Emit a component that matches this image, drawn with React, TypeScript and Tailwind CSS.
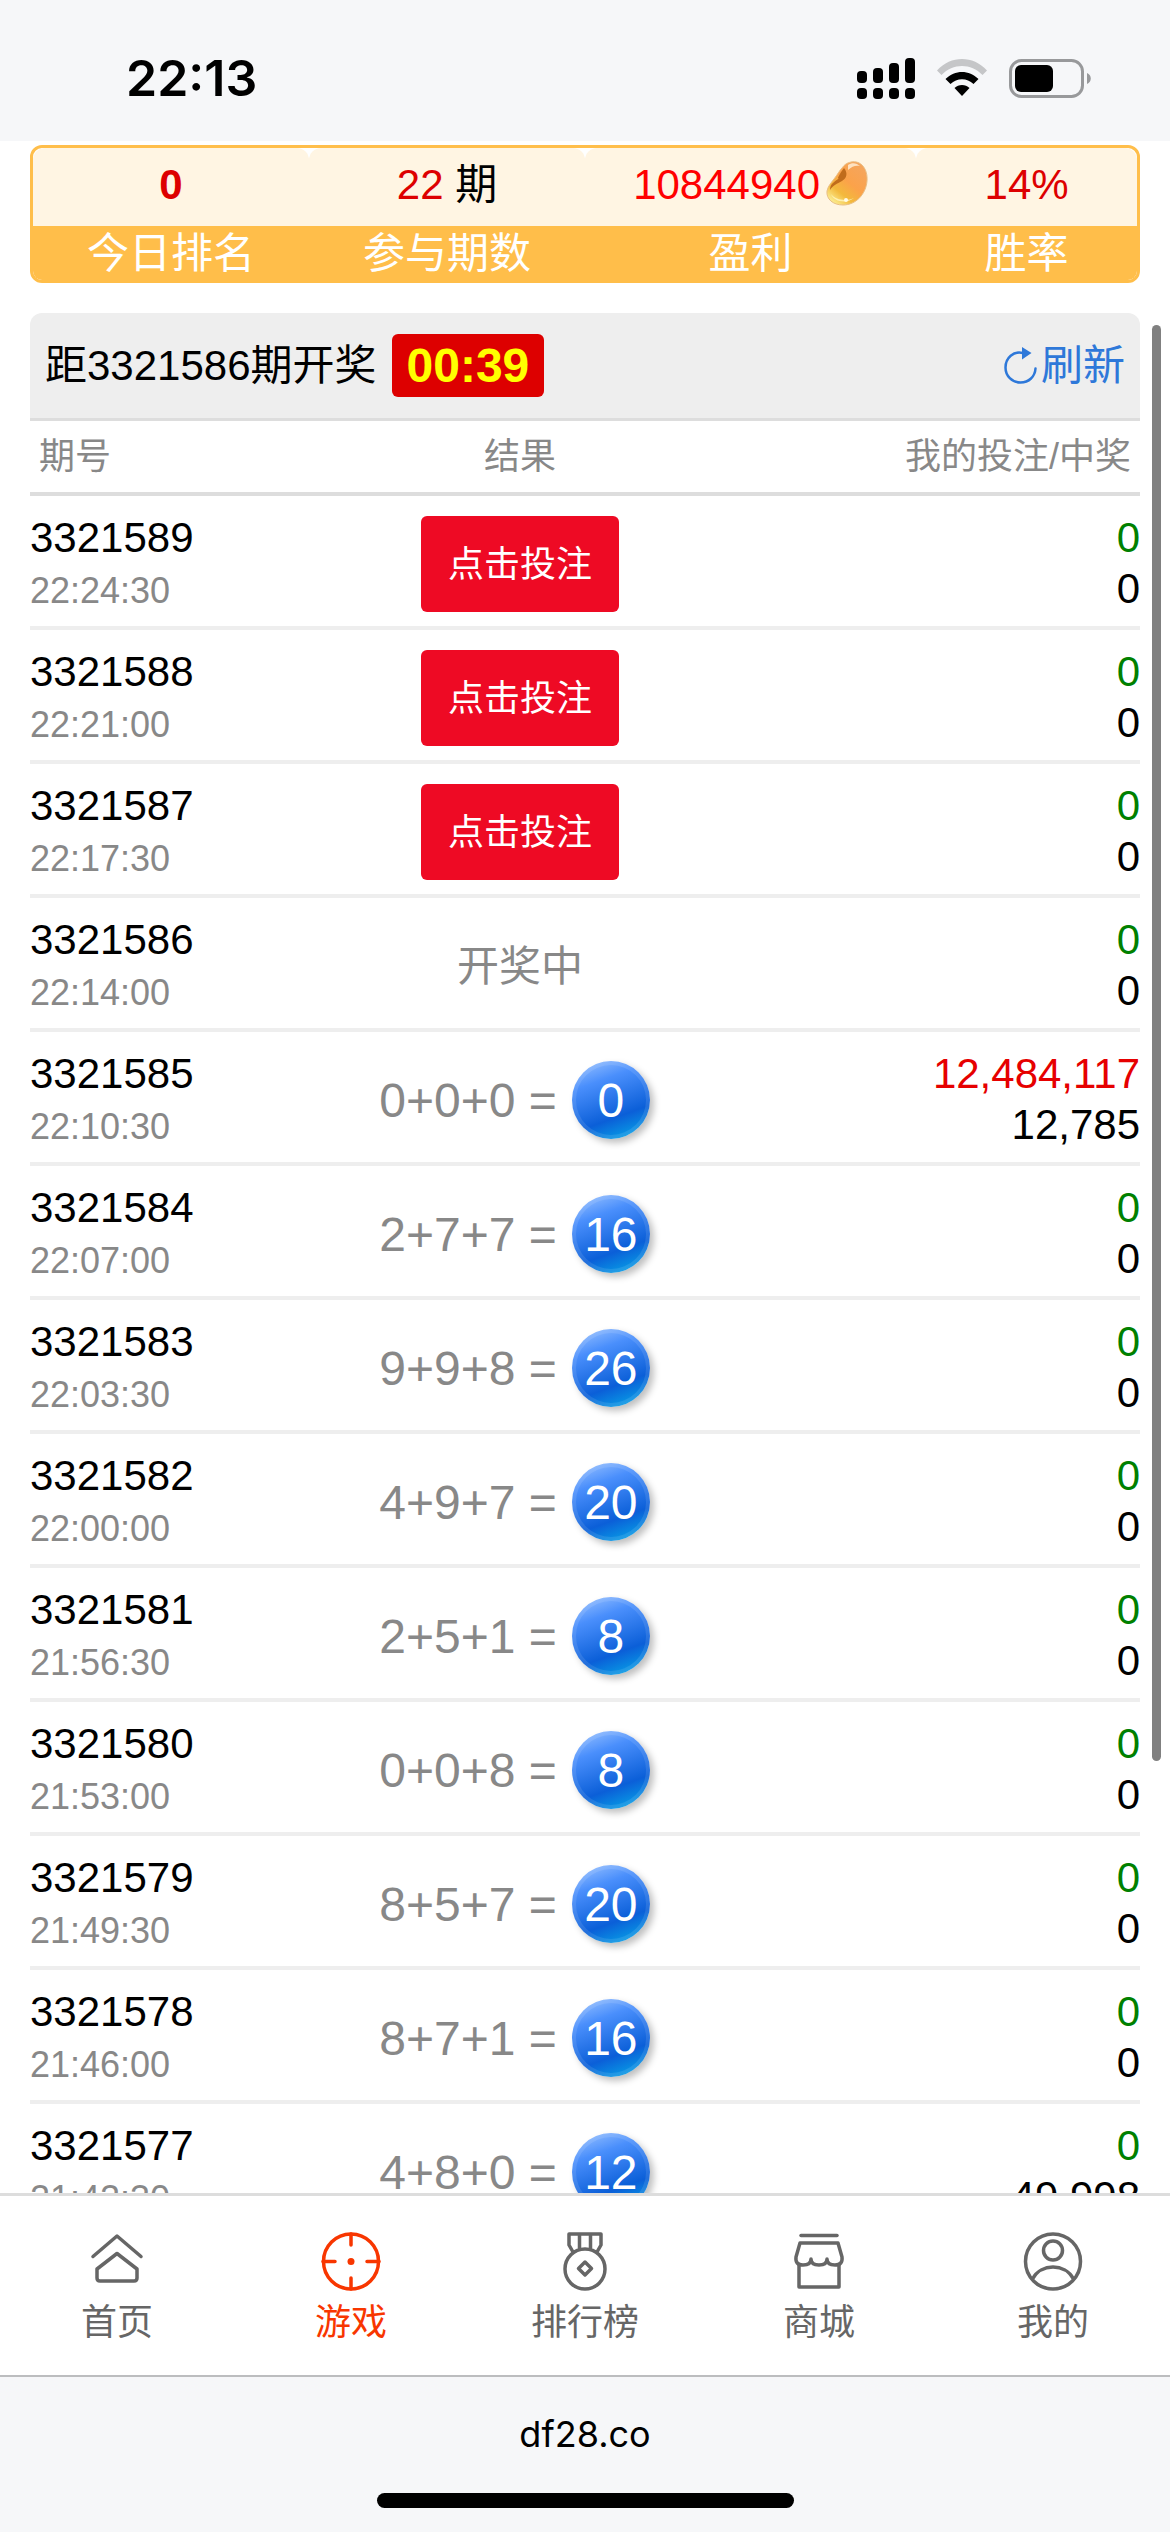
type Draw = {
  id: string;
  time: string;
  status: 'open' | 'pending' | 'done';
  sum?: string;
  total?: number;
  bet: string;
  win: string;
  hit?: boolean;
};

const draws: Draw[] = [
  { id: '3321589', time: '22:24:30', status: 'open', bet: '0', win: '0' },
  { id: '3321588', time: '22:21:00', status: 'open', bet: '0', win: '0' },
  { id: '3321587', time: '22:17:30', status: 'open', bet: '0', win: '0' },
  { id: '3321586', time: '22:14:00', status: 'pending', bet: '0', win: '0' },
  { id: '3321585', time: '22:10:30', status: 'done', sum: '0+0+0', total: 0, bet: '12,484,117', win: '12,785', hit: true },
  { id: '3321584', time: '22:07:00', status: 'done', sum: '2+7+7', total: 16, bet: '0', win: '0' },
  { id: '3321583', time: '22:03:30', status: 'done', sum: '9+9+8', total: 26, bet: '0', win: '0' },
  { id: '3321582', time: '22:00:00', status: 'done', sum: '4+9+7', total: 20, bet: '0', win: '0' },
  { id: '3321581', time: '21:56:30', status: 'done', sum: '2+5+1', total: 8, bet: '0', win: '0' },
  { id: '3321580', time: '21:53:00', status: 'done', sum: '0+0+8', total: 8, bet: '0', win: '0' },
  { id: '3321579', time: '21:49:30', status: 'done', sum: '8+5+7', total: 20, bet: '0', win: '0' },
  { id: '3321578', time: '21:46:00', status: 'done', sum: '8+7+1', total: 16, bet: '0', win: '0' },
  { id: '3321577', time: '21:42:30', status: 'done', sum: '4+8+0', total: 12, bet: '0', win: '49,998' },
];

function SignalIcon() {
  const tops = [13, 10, 5, 0];
  return (
    <svg width="58" height="41" viewBox="0 0 58 41" aria-hidden="true">
      {tops.map((top, i) => (
        <g key={i}>
          <rect x={i * 16} y={top} width="10" height={25 - top} rx="4" />
          <rect x={i * 16} y="30" width="10" height="11" rx="4" />
        </g>
      ))}
    </svg>
  );
}

function WifiIcon() {
  return (
    <svg width="50" height="38" viewBox="0 0 50 38" aria-hidden="true">
      <path d="M0 11.5C14-3.8 36-3.8 50 11.5L45.5 16C34 4 16 4 4.500 16Z" fill="#c5c6c8" />
      <path d="M8.500 20C18 10.500 32 10.500 41.500 20L36.500 25C30 18.500 20 18.500 13.500 25Z" />
      <path d="M17.500 29C21.500 25 28.500 25 32.500 29L25 37Z" />
    </svg>
  );
}

function BatteryIcon() {
  return (
    <svg width="82" height="39" viewBox="0 0 82 39" aria-hidden="true">
      <rect x="1.5" y="1.5" width="72" height="36" rx="11" fill="none" stroke="#98999b" strokeWidth="3" />
      <rect x="6" y="6" width="38" height="27" rx="6" />
      <path d="M78 14c5 2 5 9 0 11Z" fill="#98999b" />
    </svg>
  );
}

function BeanIcon() {
  return (
    <svg width="42" height="45" viewBox="0 0 42 45" aria-hidden="true">
      <defs>
        <linearGradient id="bean" x1="0.85" y1="0.1" x2="0.2" y2="0.95">
          <stop offset="0" stopColor="#f5a55c" />
          <stop offset="0.45" stopColor="#fba24a" />
          <stop offset="0.75" stopColor="#f3b93c" />
          <stop offset="1" stopColor="#fbe98a" />
        </linearGradient>
      </defs>
      <path
        d="M25 1C35-1 42 8 41 20C40 33 30 44 17 44C7 44 0 38 1 30C2 25 5 22 8 18C12 13 13 10 16 7C19 3 21 2 25 1Z"
        fill="url(#bean)"
        stroke="#e8bd84"
        strokeWidth="1"
      />
      <path d="M18 7C22 12 21 17 16 20C11 23 7 24 4 29C4 22 9 21 13 17C10 19 15 11 18 7Z" fill="#c06c1c" />
      <path d="M22 4C26 1 31 2 34 5C30 4 26 5 22 9Z" fill="#fff1dc" opacity="0.8" />
      <path d="M5 33C8 41 20 43 28 37C22 40 10 40 5 33Z" fill="#fff7c4" opacity="0.8" />
      <circle cx="20" cy="39" r="2" fill="#fffbe8" />
    </svg>
  );
}

function RefreshIcon() {
  return (
    <svg width="33" height="38" viewBox="0 0 33 38" fill="none" aria-hidden="true">
      <path d="M19 6C9.500 3.500 1.500 11 1.500 20.500C1.500 29 8 35.500 16.500 35.500C25 35.500 31 29.500 31.500 21.500" stroke="currentColor" strokeWidth="2.500" strokeLinecap="round" />
      <path d="M18 0L27.500 6L18 12.500Z" fill="currentColor" />
    </svg>
  );
}

const tabs = [
  {
    label: '首页',
    icon: (
      <>
        <path d="M6 24.500L30 4L54 24.500" />
        <path d="M10 37L30 21.500L50 37V46Q50 49 47 49H13Q10 49 10 46Z" />
      </>
    ),
  },
  {
    label: '游戏',
    active: true,
    icon: (
      <>
        <circle cx="30" cy="29.5" r="27.5" />
        <path d="M30 2V13M30 46V57M2 29.500H14M46 29.500H58" />
        <circle cx="30" cy="29.5" r="3.5" fill="currentColor" stroke="none" />
      </>
    ),
  },
  {
    label: '排行榜',
    icon: (
      <>
        <circle cx="30" cy="37" r="20" />
        <path d="M18 20L14 13V2H46V13L42 20M24.500 2V16M35.500 2V16" />
        <path d="M30 30L36.500 36.500L30 43L23.500 36.500Z" />
      </>
    ),
  },
  {
    label: '商城',
    icon: (
      <>
        <path d="M12 3.500H48" />
        <path d="M11 11H49L53 25Q54 33 46 33Q38 33 38 27Q38 33 30 33Q22 33 22 27Q22 33 14 33Q6 33 7 25Z" />
        <path d="M10 33V55H50V33" />
      </>
    ),
  },
  {
    label: '我的',
    icon: (
      <>
        <circle cx="30" cy="29.5" r="27.5" />
        <circle cx="30" cy="18.5" r="9.5" />
        <path d="M9.500 47C18 31 42 31 50.500 47" />
      </>
    ),
  },
];

function Result({ draw }: { draw: Draw }) {
  if (draw.status === 'open') {
    return (
      <button type="button" className="h-24 rounded-md bg-[#ee0a24] px-[27px] text-[36px] text-white">
        点击投注
      </button>
    );
  }
  if (draw.status === 'pending') {
    return <span className="text-[42px] text-[#888]">开奖中</span>;
  }
  return (
    <div className="flex items-center justify-center gap-[15px] pr-[11px] text-[48px] text-[#888]">
      <span>{draw.sum} =</span>
      <span className="flex size-[78px] items-center justify-center rounded-full bg-[linear-gradient(160deg,#a3c8ff_0%,#4a8ffc_28%,#0b5fd8_68%,#05b4ea_100%)] text-white shadow-[4px_4px_7px_rgba(0,0,0,0.25),inset_0_0_0_4px_rgba(255,255,255,0.1)]">
        {draw.total}
      </span>
    </div>
  );
}

export default function App() {
  return (
    <div className="flex h-screen flex-col bg-white font-['Liberation_Sans','Noto_Sans_CJK_SC',sans-serif] text-black">
      {/* Status bar */}
      <header className="flex h-[141px] shrink-0 items-center justify-between bg-[#f6f7f9] pr-[79px] pb-[13px] pl-[126px] pt-7">
        <time className="font-['Inter',sans-serif] text-[50px] leading-[60px] font-semibold">22:13</time>
        <div className="flex items-center gap-[22px]">
          <SignalIcon />
          <WifiIcon />
          <BatteryIcon />
        </div>
      </header>

      <main className="relative min-h-0 flex-1 overflow-hidden px-[30px] pt-1">
        {/* Today's stats */}
        <dl className="grid grid-cols-[25fr_25fr_30fr_20fr] overflow-hidden rounded-xl border-3 border-[#ffbe4a] bg-white text-center text-[42px]">
          <div className="flex flex-col-reverse">
            <dt className="h-[54px] bg-[#ffbe4a] leading-[56px] text-white">今日排名</dt>
            <dd className="h-[78px] rounded-t-xl bg-[#fff5e3] leading-[74px] font-bold text-[#d00]">0</dd>
          </div>
          <div className="flex flex-col-reverse">
            <dt className="h-[54px] bg-[#ffbe4a] leading-[56px] text-white">参与期数</dt>
            <dd className="h-[78px] rounded-t-xl bg-[#fff5e3] leading-[74px]">
              <span className="text-[#d00]">22</span> 期
            </dd>
          </div>
          <div className="flex flex-col-reverse">
            <dt className="h-[54px] bg-[#ffbe4a] leading-[56px] text-white">盈利</dt>
            <dd className="flex h-[78px] justify-center gap-1.5 rounded-t-xl bg-[#fff5e3] pt-[13px] leading-[48px] text-[#f00]">
              10844940
              <BeanIcon />
            </dd>
          </div>
          <div className="flex flex-col-reverse">
            <dt className="h-[54px] bg-[#ffbe4a] leading-[56px] text-white">胜率</dt>
            <dd className="h-[78px] rounded-t-xl bg-[#fff5e3] leading-[74px] text-[#d00]">14%</dd>
          </div>
        </dl>

        {/* Countdown */}
        <div className="mt-[30px] flex h-[108px] items-center justify-between rounded-t-xl border-b-3 border-[#ddd] bg-[#eee] px-[15px] text-[42px]">
          <div className="flex items-center gap-[15px]">
            <span>距3321586期开奖</span>
            <span className="rounded-md bg-[#d00] px-[15px] text-[48px] leading-[63px] font-bold text-[#ff0]">00:39</span>
          </div>
          <button type="button" className="flex items-center gap-1 text-[#2e78d9]">
            <RefreshIcon />
            刷新
          </button>
        </div>

        <table className="w-full table-fixed border-collapse">
          <thead>
            <tr className="h-[73px] border-b-4 border-[#ddd] text-[36px] leading-[54px] text-[#888]">
              <th className="w-[27%] pl-[9px] text-left font-normal">期号</th>
              <th className="text-center font-normal">结果</th>
              <th className="w-[385px] pr-[9px] text-right font-normal sm:w-[38.7%]">我的投注/中奖</th>
            </tr>
          </thead>
          <tbody>
            {draws.map((draw) => (
              <tr key={draw.id} className="h-[134px] border-b-4 border-[#eee] text-[42px] leading-[51px]">
                <td className="pt-4 align-top">
                  <div>{draw.id}</div>
                  <div className="text-[36px] leading-[55px] text-[#888]">{draw.time}</div>
                </td>
                <td className="pt-1.5 text-center">
                  <Result draw={draw} />
                </td>
                <td className="pt-4 text-right align-top">
                  <div className={draw.hit ? 'text-[#e60000]' : 'text-[#008000]'}>{draw.bet}</div>
                  <div>{draw.win}</div>
                </td>
              </tr>
            ))}
          </tbody>
        </table>

        {/* Scroll indicator */}
        <div className="absolute top-[184px] right-[9px] h-[70%] w-[9px] rounded-full bg-[#808080]" />
      </main>

      {/* Tabs */}
      <nav className="grid h-[184px] shrink-0 grid-cols-5 border-t-3 border-b-2 border-t-[#ddd] border-b-[#bcbdbf] bg-white">
        {tabs.map((tab) => (
          <a
            key={tab.label}
            href="#"
            className={`flex flex-col items-center gap-1 pt-9 text-[36px] leading-[54px] ${tab.active ? 'text-[#f83600]' : 'text-[#666]'}`}
          >
            <svg width="60" height="60" viewBox="0 0 60 60" fill="none" stroke="currentColor" strokeWidth="3.500" strokeLinecap="round" strokeLinejoin="round" aria-hidden="true">
              {tab.icon}
            </svg>
            {tab.label}
          </a>
        ))}
      </nav>

      {/* Browser bar */}
      <footer className="flex h-[155px] shrink-0 flex-col items-center justify-between bg-[#f6f7f9] pt-[35px] pb-6">
        <span className="font-['Inter',sans-serif] text-[36px] leading-[44px]">df28.co</span>
        <div className="h-[15px] w-[417px] rounded-full bg-black" />
      </footer>
    </div>
  );
}
